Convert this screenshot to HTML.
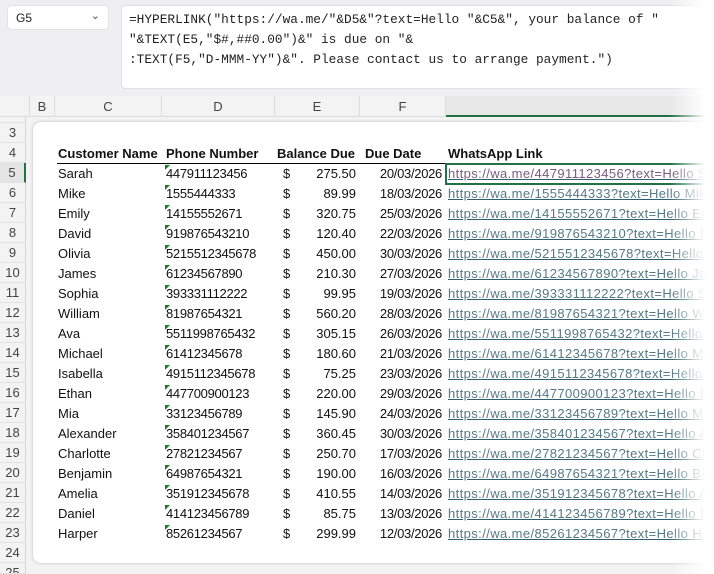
<!DOCTYPE html>
<html><head><meta charset="utf-8"><style>
*{margin:0;padding:0;box-sizing:border-box}
html,body{width:714px;height:574px;overflow:hidden}
body{background:#f3f3f3;font-family:"Liberation Sans",sans-serif;position:relative}
.top{position:absolute;left:0;top:0;width:714px;height:96px;background:#efeff1}
.nb{position:absolute;left:7px;top:5px;width:102px;height:25px;background:#fff;border:1px solid #e2e2e2;border-radius:4px;font-size:12px;padding:5px 0 0 8px;color:#222}
.fb{position:absolute;left:121px;top:5px;width:593px;height:84px;background:#fff;border:1px solid #e0e0e0;border-right:none;border-radius:4px 0 0 4px;font-family:"Liberation Mono",monospace;font-size:12.8px;line-height:20px;padding:4px 0 0 7px;color:#222;white-space:pre;overflow:hidden}
.fade{position:absolute;left:670px;top:0;width:44px;height:574px;background:linear-gradient(90deg,rgba(255,255,255,0),#fff 80%)}
.ch{position:absolute;top:96px;height:21px;background:#f3f3f3;font-size:13px;color:#444;text-align:center;line-height:21px;border-right:1px solid #dcdcdc;border-bottom:1px solid #dcdcdc}
.rn{position:absolute;left:0;width:26px;height:20px;font-size:13px;color:#444;text-align:center;line-height:20px;border-right:1px solid #d6d6d6;border-bottom:1px solid #e2e2e2;background:#f3f3f3}
.card{position:absolute;left:33px;top:122px;width:681px;height:441px;background:#fff;border-radius:8px 0 0 8px;box-shadow:0 0 3px rgba(0,0,0,.25)}
.c{position:absolute;font-size:13px;color:#111;line-height:20px;white-space:nowrap}
.ph{letter-spacing:-0.3px}
.r{text-align:right}
.lk{color:#557a86;text-decoration:underline;text-decoration-color:#2f5f6e;letter-spacing:0.4px;width:266px;overflow:hidden}
.tri{position:absolute;width:0;height:0;border-top:5px solid #1a7a2a;border-right:5px solid transparent}
</style></head><body>
<div class="top"></div>
<div class="nb">G5<span style="position:absolute;right:8px;top:3px;font-size:11px;color:#555">&#8964;</span></div>
<div class="fb">=HYPERLINK("https://wa.me/"&amp;D5&amp;"?text=Hello "&amp;C5&amp;", your balance of "
"&amp;TEXT(E5,"$#,##0.00")&amp;" is due on "&amp;
:TEXT(F5,"D-MMM-YY")&amp;". Please contact us to arrange payment.")</div>
<div class="ch" style="left:0;width:30px"></div>
<div class="ch" style="left:30px;width:25px">B</div>
<div class="ch" style="left:55px;width:107px">C</div>
<div class="ch" style="left:162px;width:113px">D</div>
<div class="ch" style="left:275px;width:85px">E</div>
<div class="ch" style="left:360px;width:86px">F</div>
<div class="ch" style="left:446px;width:268px;border-right:none;border-bottom:2px solid #217346;background:#e8e8e8"></div>
<div class="rn" style="top:117px;height:6px;overflow:hidden"></div>
<div id="rows"></div>
<div class="card"></div>
<div style="position:absolute;left:57px;top:163px;width:389px;height:1px;background:#000"></div>
<div class="c" style="left:58px;top:144px;font-weight:bold">Customer Name</div>
<div class="c" style="left:166px;top:144px;font-weight:bold">Phone Number</div>
<div class="c" style="left:277px;top:144px;font-weight:bold">Balance Due</div>
<div class="c" style="left:365px;top:144px;font-weight:bold">Due Date</div>
<div class="c" style="left:448px;top:144px;font-weight:bold">WhatsApp Link</div>
<div style="position:absolute;left:445px;top:163px;width:269px;height:22px;border:2px solid #217346;border-right:none"></div>
<div id="data"></div>
<div class="fade"></div>
<script>
var d=[["Sarah","447911123456","275.50","20/03/2026"],["Mike","1555444333","89.99","18/03/2026"],["Emily","14155552671","320.75","25/03/2026"],["David","919876543210","120.40","22/03/2026"],["Olivia","5215512345678","450.00","30/03/2026"],["James","61234567890","210.30","27/03/2026"],["Sophia","393331112222","99.95","19/03/2026"],["William","81987654321","560.20","28/03/2026"],["Ava","5511998765432","305.15","26/03/2026"],["Michael","61412345678","180.60","21/03/2026"],["Isabella","4915112345678","75.25","23/03/2026"],["Ethan","447700900123","220.00","29/03/2026"],["Mia","33123456789","145.90","24/03/2026"],["Alexander","358401234567","360.45","30/03/2026"],["Charlotte","27821234567","250.70","17/03/2026"],["Benjamin","64987654321","190.00","16/03/2026"],["Amelia","351912345678","410.55","14/03/2026"],["Daniel","414123456789","85.75","13/03/2026"],["Harper","85261234567","299.99","12/03/2026"]];
var r='';for(var i=3;i<=25;i++){var t=123+(i-3)*20;r+='<div class="rn" style="top:'+t+'px;'+(i==25?'height:11px;overflow:hidden;':'')+(i==5?'background:#e4e4e4;border-right:2px solid #217346':'')+'">'+i+'</div>';}
document.getElementById('rows').innerHTML=r;
var h='';d.forEach(function(x,i){var t=164+i*20;
h+='<div class="c" style="left:58px;top:'+t+'px">'+x[0]+'</div>';
h+='<div class="tri" style="left:165px;top:'+(t+1)+'px"></div>';
h+='<div class="c ph" style="left:166px;top:'+t+'px">'+x[1]+'</div>';
h+='<div class="c" style="left:283px;top:'+t+'px">$</div>';
h+='<div class="c r" style="left:300px;width:56px;top:'+t+'px">'+x[2]+'</div>';
h+='<div class="c r ph" style="left:360px;width:82px;top:'+t+'px">'+x[3]+'</div>';
h+='<div class="c lk" style="left:448px;top:'+t+'px;'+(i==0?'color:#7a5a80':'')+'">https://wa.me/'+x[1]+'?text=Hello '+x[0]+'</div>';});
document.getElementById('data').innerHTML=h;
</script>
</body></html>
